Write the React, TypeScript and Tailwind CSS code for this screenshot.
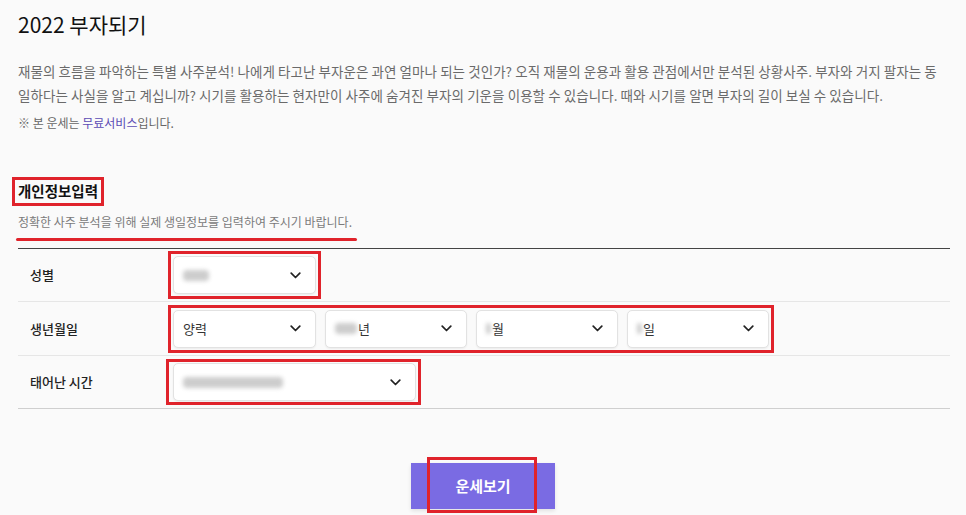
import React from "react";

const font = { fontFamily: '"Noto Sans CJK KR", "Noto Sans", sans-serif' };

function Chevron() {
  return (
    <svg width="11" height="7" viewBox="0 0 11 7" fill="none" className="shrink-0">
      <path d="M1.2 1.2 L5.5 5.5 L9.8 1.2" stroke="#222" strokeWidth="1.7" strokeLinecap="round" strokeLinejoin="round" />
    </svg>
  );
}

function Select({ w, children }: { w: string; children: React.ReactNode }) {
  return (
    <div className={`${w} h-[38px] bg-white border border-[#e2e2e2] rounded-[5px] shadow-[0_1px_2px_rgba(0,0,0,0.06)] flex items-center justify-between pl-[9px] pr-[14px] text-[13px] text-[#333]`}>
      <div className="flex items-center">{children}</div>
      <Chevron />
    </div>
  );
}

function Blur({ w }: { w: string }) {
  return <span className={`inline-block ${w} h-[11px] bg-[#cdcdcd] rounded-sm blur-[2px]`} />;
}

export default function App() {
  return (
    <div className="w-[966px] h-[515px] bg-[#fafafa] overflow-hidden relative" style={font}>
      <div className="px-[18px]">
        <h1 className="text-[21px] leading-[28px] text-[#111] pt-[10px]">2022 부자되기</h1>
        <div className="mt-[21px] text-[13.5px] leading-[24px] text-[#6a6a6a] tracking-[0.06px]">
          <div className="whitespace-nowrap">재물의 흐름을 파악하는 특별 사주분석! 나에게 타고난 부자운은 과연 얼마나 되는 것인가? 오직 재물의 운용과 활용 관점에서만 분석된 상황사주. 부자와 거지 팔자는 동</div>
          <div className="whitespace-nowrap">일하다는 사실을 알고 계십니까? 시기를 활용하는 현자만이 사주에 숨겨진 부자의 기운을 이용할 수 있습니다. 때와 시기를 알면 부자의 길이 보실 수 있습니다.</div>
        </div>
        <div className="mt-[6px] text-[12px] leading-[20px] text-[#666]">
          ※ 본 운세는 <span className="text-[#5a4bb5]">무료서비스</span>입니다.
        </div>

        <div className="mt-[44px] -ml-[6px] inline-block border-[3px] border-[#e0232b] px-[3px] pt-[1px] pb-[2px]">
          <div className="text-[14.5px] font-bold leading-[20px] text-[#111]">개인정보입력</div>
        </div>
        <div className="mt-[7px] text-[12px] leading-[18px] text-[#7a7a7a]">정확한 사주 분석을 위해 실제 생일정보를 입력하여 주시기 바랍니다.</div>
        <div className="mt-[7px] w-[341px] -ml-[2px] h-[3px] bg-[#e0232b] rounded-full" />

        <div className="mt-[7px] w-[932px] border-t border-[#444]">
          <div className="h-[53px] flex items-center border-b border-[#e6e6e6]">
            <div className="w-[150px] pl-[12px] text-[13px] font-medium text-[#222]">성별</div>
            <div className="border-[3px] border-[#e0232b] p-[2px]">
              <Select w="w-[143px]"><Blur w="w-[26px]" /></Select>
            </div>
          </div>
          <div className="h-[54px] flex items-center border-b border-[#e6e6e6]">
            <div className="w-[150px] pl-[12px] text-[13px] font-medium text-[#222]">생년월일</div>
            <div className="border-[3px] border-[#e0232b] p-[2px] flex gap-[9px]">
              <Select w="w-[143px]">양력</Select>
              <Select w="w-[142px]"><Blur w="w-[22px]" /><span className="ml-[1px]">년</span></Select>
              <Select w="w-[142px]"><Blur w="w-[5px]" /><span className="ml-[1px]">월</span></Select>
              <Select w="w-[142px]"><Blur w="w-[5px]" /><span className="ml-[1px]">일</span></Select>
            </div>
          </div>
          <div className="h-[53px] flex items-center border-b border-[#cfcfcf]">
            <div className="w-[148px] pl-[12px] text-[13px] font-medium text-[#222]">태어난 시간</div>
            <div className="border-[3px] border-[#e0232b] pl-[4px] pr-[2px] py-[1px]">
              <Select w="w-[243px]"><Blur w="w-[100px]" /></Select>
            </div>
          </div>
        </div>

        <div className="mt-[54px] flex justify-center">
          <div className="relative">
            <div className="w-[144px] h-[46px] bg-[#7a6be3] flex items-center justify-center text-white font-bold text-[15px] shadow-[0_2px_4px_rgba(0,0,0,0.1)]">
              운세보기
            </div>
            <div className="absolute left-[16px] top-[-6px] w-[110px] h-[56px] border-[3px] border-[#e0232b]" />
          </div>
        </div>
      </div>
    </div>
  );
}
